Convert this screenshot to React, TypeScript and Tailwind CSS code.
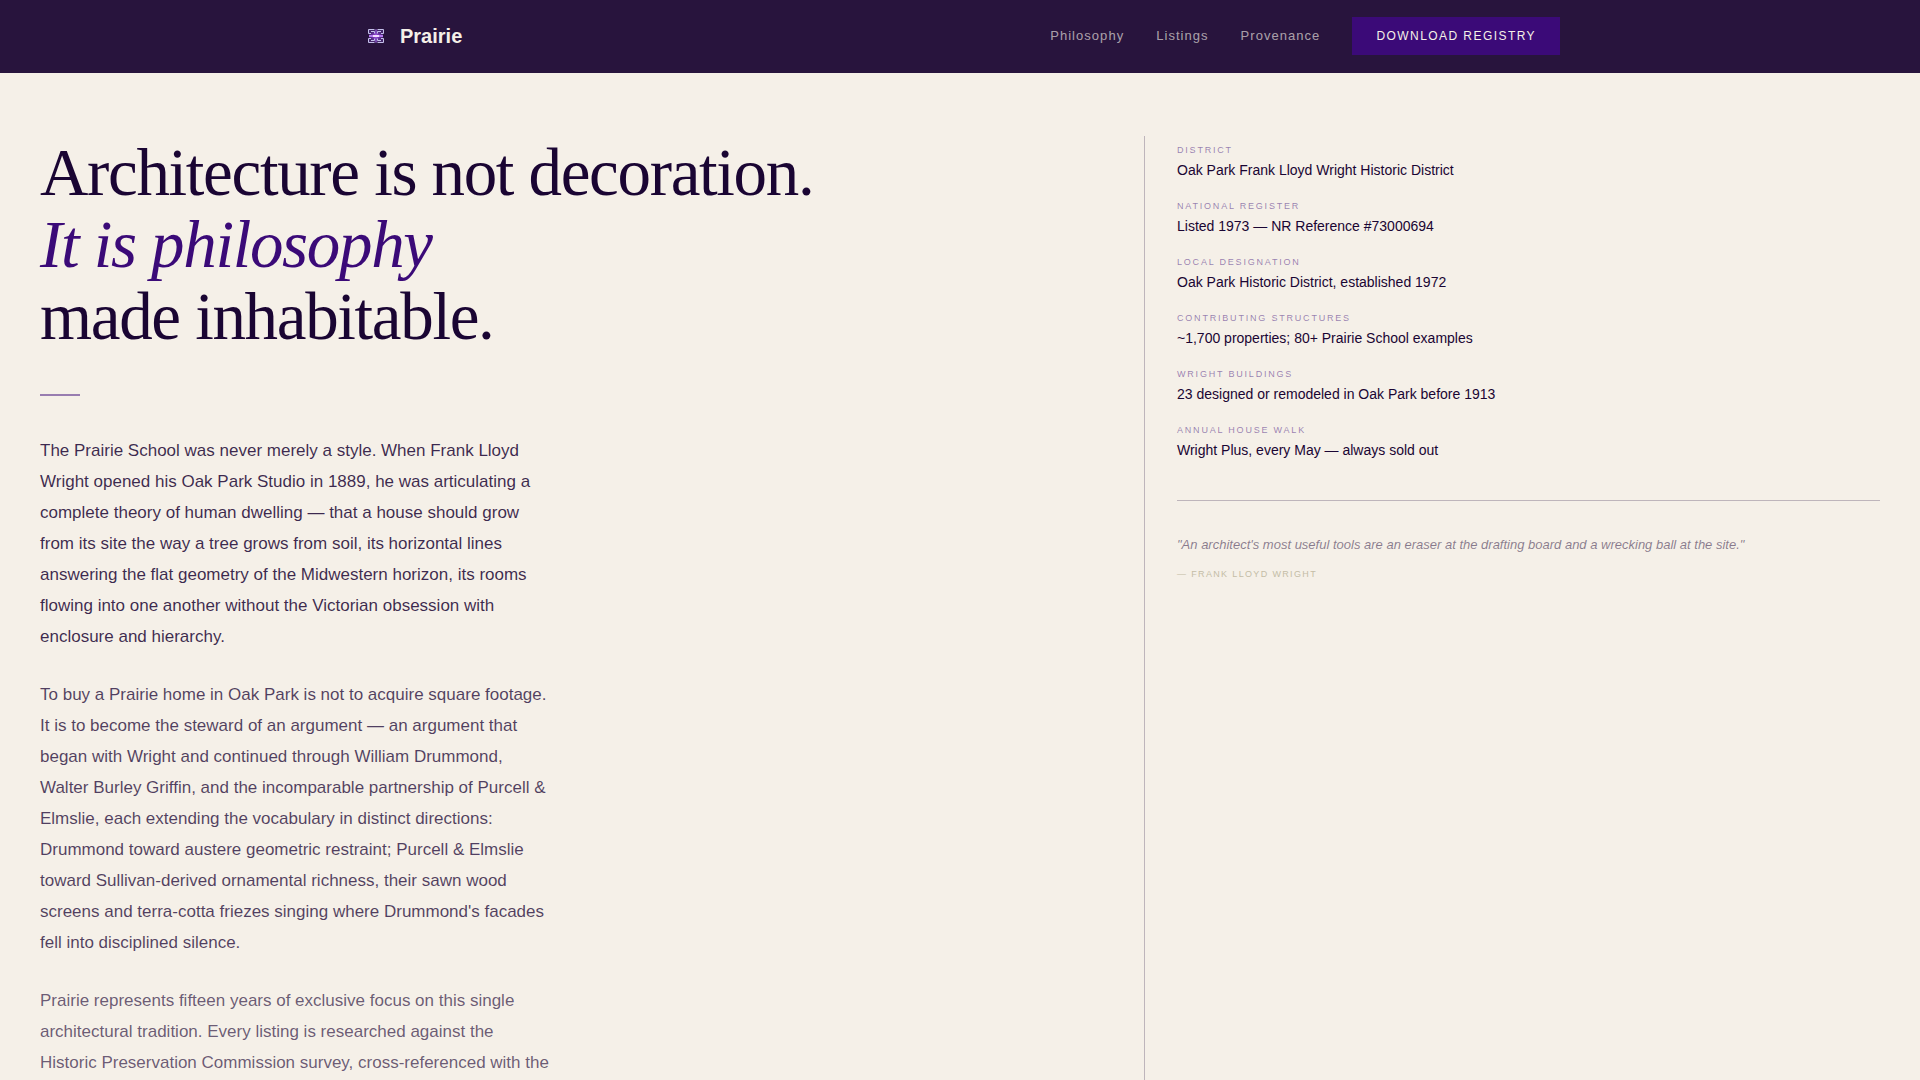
import { useId } from "react";

const facts = [
  { label: "District", value: "Oak Park Frank Lloyd Wright Historic District" },
  { label: "National Register", value: "Listed 1973 — NR Reference #73000694" },
  { label: "Local Designation", value: "Oak Park Historic District, established 1972" },
  { label: "Contributing Structures", value: "~1,700 properties; 80+ Prairie School examples" },
  { label: "Wright Buildings", value: "23 designed or remodeled in Oak Park before 1913" },
  { label: "Annual House Walk", value: "Wright Plus, every May — always sold out" },
];

const links = ["Philosophy", "Listings", "Provenance"];

function Logo() {
  const glow = useId();

  return (
    <svg width="32" height="32" viewBox="0 0 32 32" fill="none" aria-hidden="true">
      <defs>
        <radialGradient id={glow}>
          <stop offset="0" stopColor="#a23cf0" />
          <stop offset="1" stopColor="#7a4cc0" stopOpacity="0.35" />
        </radialGradient>
      </defs>
      <rect x="9" y="10" width="14" height="12" fill={`url(#${glow})`} />
      <g stroke="#c4c0ea">
        <path d="M14.5 9.5H8.5V13.5H11M17.5 9.5H23.500V13.5H21" />
        <path d="M14.5 22.5H8.5V18.5H11M17.5 22.5H23.5V18.5H21" />
        <path d="M11 11.5H14.5V13.5M21 11.5H17.5V13.5" />
        <path d="M11 20.5H14.5V18.5M21 20.5H17.5V18.5" />
      </g>
      <path d="M16 9V23" stroke="#9a62dc" />
      <path d="M9 16H23" stroke="#b47af0" strokeWidth="2" />
      <path d="M13 16H19" stroke="#f3dcff" strokeWidth="2" />
    </svg>
  );
}

export default function App() {
  return (
    <div className="flex min-h-screen flex-col bg-[#f5f0e8] font-['Liberation_Sans',Arial,sans-serif] text-[#1a0533]">
      {/* NAV */}
      <header className="border-b border-[#28143d] bg-[#28143d]">
        <div className="mx-auto flex h-18 max-w-7xl items-center justify-between px-10">
          <a href="#" className="flex items-center gap-2 text-xl font-bold text-[#f5f0e8]">
            <Logo />
            Prairie
          </a>

          <nav className="flex items-center gap-8">
            {links.map((link) => (
              <a
                key={link}
                href={`#${link.toLowerCase()}`}
                className="text-[13px] tracking-[0.08em] text-[#f5f0e8]/65"
              >
                {link}
              </a>
            ))}
            <button className="h-[38px] bg-[#3b0a78] px-6 text-xs tracking-[0.12em] text-[#f5f0e8] uppercase">
              Download Registry
            </button>
          </nav>
        </div>
      </header>

      {/* MANIFESTO */}
      <main className="grid flex-1 grid-cols-[3fr_2fr] px-10 pt-[63px]">
        <section>
          <h1 className="font-['Liberation_Serif','Times_New_Roman',serif] text-[67px] leading-[72px] tracking-[-0.02em]">
            Architecture is not decoration.
            <br />
            <em className="text-[#3b0a78]">It is philosophy</em>
            <br />
            made inhabitable.
          </h1>

          <div className="mt-[42px] h-0.5 w-10 bg-[#3b0a78]/50"></div>

          <div className="mt-[39px] flex max-w-lg flex-col gap-[27px] text-[17px] leading-[31px]">
            <p className="text-[#1a0533]/85">
              The Prairie School was never merely a style. When Frank Lloyd Wright opened his Oak
              Park Studio in 1889, he was articulating a complete theory of human dwelling — that a
              house should grow from its site the way a tree grows from soil, its horizontal lines
              answering the flat geometry of the Midwestern horizon, its rooms flowing into one
              another without the Victorian obsession with enclosure and hierarchy.
            </p>
            <p className="text-[#1a0533]/75">
              To buy a Prairie home in Oak Park is not to acquire square footage. It is to become
              the steward of an argument — an argument that began with Wright and continued through
              William Drummond, Walter Burley Griffin, and the incomparable partnership of Purcell
              &amp; Elmslie, each extending the vocabulary in distinct directions: Drummond toward
              austere geometric restraint; Purcell &amp; Elmslie toward Sullivan-derived ornamental
              richness, their sawn wood screens and terra-cotta friezes singing where Drummond's
              facades fell into disciplined silence.
            </p>
            <p className="text-[#1a0533]/65">
              Prairie represents fifteen years of exclusive focus on this single architectural
              tradition. Every listing is researched against the Historic Preservation Commission
              survey, cross-referenced with the
            </p>
          </div>
        </section>

        <aside className="border-l border-[#1a0533]/25 pt-2 pl-8">
          <dl className="flex flex-col gap-5">
            {facts.map((fact) => (
              <div key={fact.label}>
                <dt className="text-[9px] leading-3 tracking-[0.2em] text-[#3b0a78]/50 uppercase">
                  {fact.label}
                </dt>
                <dd className="mt-1 text-sm leading-5">{fact.value}</dd>
              </div>
            ))}
          </dl>

          <figure className="mt-10 border-t border-[#1a0533]/25 pt-8">
            <blockquote className="text-[13px] leading-6 text-[#1a0533]/50 italic">
              "An architect's most useful tools are an eraser at the drafting board and a wrecking
              ball at the site."
            </blockquote>
            <figcaption className="mt-[11px] text-[9px] leading-3 tracking-[0.15em] text-[#c4bda6] uppercase">
              — Frank Lloyd Wright
            </figcaption>
          </figure>
        </aside>
      </main>
    </div>
  );
}
